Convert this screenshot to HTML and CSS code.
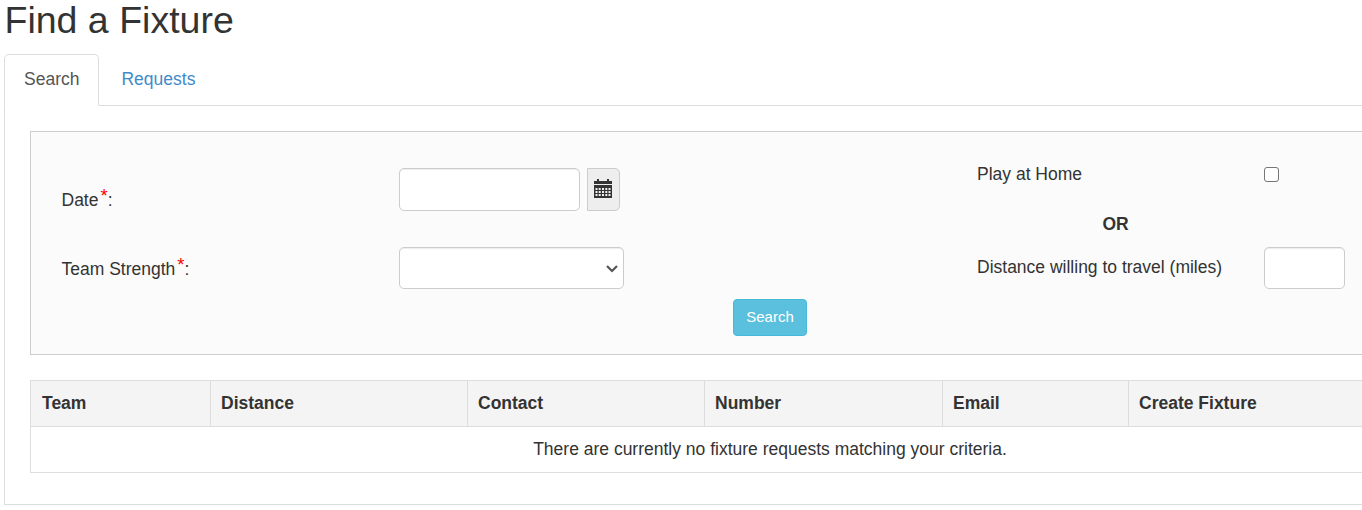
FILE: index.html
```html
<!DOCTYPE html>
<html lang="en">

<head>
    <meta charset="UTF-8">
    <meta name="viewport" content="width=device-width, initial-scale=1.0">
    <title>Find a Fixture</title>
    <link rel="stylesheet" href="styles.css">
</head>

<body>
    <div class="page">
        <h1>Find a Fixture</h1>

        <!-- Tabs -->
        <ul class="tabs">
            <li><a href="#" class="tab active">Search</a></li>
            <li><a href="#" class="tab">Requests</a></li>
        </ul>

        <div class="tab-content">
            <!-- Search form -->
            <form class="search-panel">
                <div class="search-fields">
                    <div class="column-left">
                        <div class="form-row">
                            <label for="date">Date<span class="required">*</span>:</label>
                            <input type="text" id="date" class="form-control date-input">
                            <button type="button" class="date-button" aria-label="Pick a date">
                                <svg class="calendar-icon" width="18" height="20" viewBox="0 0 18 20">
                                    <path fill="#333" d="M0 2h3V0h2v2h8V0h2v2h3v3H0zM0 6h18v13H0z" />
                                    <path fill="#eee" d="M1.5 9h2v2h-2zM4.7 9h2v2h-2zM8 9h2v2H8zM11.3 9h2v2h-2zM14.5 9h2v2h-2zM1.5 12h2v2h-2zM4.7 12h2v2h-2zM8 12h2v2H8zM11.3 12h2v2h-2zM14.5 12h2v2h-2zM1.5 15h2v2h-2zM4.7 15h2v2h-2zM8 15h2v2H8zM11.3 15h2v2h-2zM14.5 15h2v2h-2z" />
                                </svg>
                            </button>
                        </div>
                        <div class="form-row">
                            <label for="strength">Team Strength<span class="required">*</span>:</label>
                            <div class="select-wrap">
                                <select id="strength" class="form-control">
                                    <option></option>
                                </select>
                                <svg class="select-arrow" width="12" height="8" viewBox="0 0 12 8">
                                    <path fill="none" stroke="#555" stroke-width="2.2" d="M1 1l5 5 5-5" />
                                </svg>
                            </div>
                        </div>
                    </div>
                    <div class="column-right">
                        <div class="home-row">
                            <label for="home">Play at Home</label>
                            <input type="checkbox" id="home" class="checkbox">
                        </div>
                        <div class="or-text">OR</div>
                        <div class="distance-row">
                            <label for="distance">Distance willing to travel (miles)</label>
                            <input type="text" id="distance" class="form-control distance-input">
                        </div>
                    </div>
                </div>
                <button type="button" class="search-button">Search</button>
            </form>

            <!-- Results -->
            <table class="results">
                <colgroup>
                    <col class="col-team">
                    <col class="col-distance">
                    <col class="col-contact">
                    <col class="col-number">
                    <col class="col-email">
                    <col>
                </colgroup>
                <thead>
                    <tr>
                        <th>Team</th>
                        <th>Distance</th>
                        <th>Contact</th>
                        <th>Number</th>
                        <th>Email</th>
                        <th>Create Fixture</th>
                    </tr>
                </thead>
                <tbody>
                    <tr>
                        <td colspan="6">There are currently no fixture requests matching your criteria.</td>
                    </tr>
                </tbody>
            </table>
        </div>
    </div>
</body>

</html>
```

FILE: styles.css
```css
* {
    box-sizing: border-box;
}

html,
body {
    overflow: hidden;
}

body {
    margin: 0;
    background-color: #fff;
    color: #333;
    font-family: "Liberation Sans", Arial, sans-serif;
    font-size: 17.5px;
    line-height: 25px;
}

.page {
    width: 1536px;
    padding-left: 4px;
}

h1 {
    margin: 0 0 13px;
    padding-left: 0.5px;
    font-size: 37.5px;
    font-weight: 500;
    line-height: 41px;
}

.tabs {
    display: flex;
    margin: 0;
    padding: 0;
    list-style: none;
    border-bottom: 1px solid #ddd;
}

.tabs li {
    margin-bottom: -1px;
}

.tab {
    display: block;
    height: 52px;
    margin-right: 2px;
    padding: 12px 19px;
    border: 1px solid transparent;
    border-radius: 5px 5px 0 0;
    color: #428bca;
    text-decoration: none;
}

.tab.active {
    border-color: #ddd;
    border-bottom-color: #fff;
    background-color: #fff;
    color: #555;
}

.tab-content {
    height: 399px;
    padding: 25px;
    border: 1px solid #ddd;
    border-top: none;
}

.search-panel {
    height: 224px;
    padding-left: 31px;
    border: 1px solid #ccc;
    background-color: #fbfbfb;
}

.search-fields {
    display: flex;
    height: 167px;
}

.column-left {
    width: 915px;
    padding-top: 36px;
}

.form-row {
    display: flex;
    height: 43px;
    margin-bottom: 36px;
}

.form-row label {
    width: 337.5px;
    margin-left: -0.5px;
    padding-top: 20px;
}

.form-row + .form-row label {
    padding-top: 10px;
}

.required {
    margin-left: 2px;
    color: #f00;
    font-size: 18.5px;
    line-height: 0;
    vertical-align: 4px;
}

.form-control {
    height: 42px;
    border: 1px solid #ccc;
    border-radius: 5px;
    background-color: #fff;
    box-shadow: inset 0 1px 1px rgba(0, 0, 0, 0.075);
}

.date-input {
    width: 181px;
    height: 43px;
    margin-right: 7px;
}

.date-button {
    width: 33px;
    height: 43px;
    padding: 0 0 0 6px;
    border: 1px solid #ccc;
    border-radius: 0 5px 5px 0;
    background-color: #eee;
}

.calendar-icon {
    display: block;
    margin-top: -1px;
}

.select-wrap {
    position: relative;
    height: 42px;
}

.select-wrap select {
    width: 225px;
    appearance: none;
}

.select-arrow {
    position: absolute;
    top: 18px;
    right: 6px;
    pointer-events: none;
}

.column-right {
    padding-top: 30px;
}

.home-row,
.distance-row {
    display: flex;
}

.home-row label,
.distance-row label {
    width: 287px;
}

.checkbox {
    width: 15px;
    height: 15px;
    margin: 5px 0 0;
    appearance: none;
    border: 1px solid #767676;
    border-radius: 3px;
    background-color: #fff;
}

.or-text {
    width: 277px;
    margin: 25px 0 10px;
    font-weight: bold;
    text-align: center;
}

.distance-row label {
    padding-top: 8px;
}

.distance-input {
    width: 81px;
}

.search-button {
    display: block;
    width: 74px;
    height: 37px;
    margin-left: 671px;
    padding: 0 0 2px;
    border: 1px solid #46b8da;
    border-radius: 4px;
    background-color: #5bc0de;
    color: #fff;
    font-family: inherit;
    font-size: 15px;
}

.results {
    width: 1480px;
    margin-top: 25px;
    border-collapse: collapse;
    table-layout: fixed;
}

.results th,
.results td {
    height: 46px;
    padding: 0 10px;
    border: 1px solid #ddd;
}

.results th {
    background-color: #f4f4f4;
    text-align: left;
}

.results th:first-child {
    padding-left: 11px;
}

.results td {
    text-align: center;
}

.col-team {
    width: 180px;
}

.col-distance {
    width: 257px;
}

.col-contact {
    width: 237px;
}

.col-number {
    width: 238px;
}

.col-email {
    width: 186px;
}
```
